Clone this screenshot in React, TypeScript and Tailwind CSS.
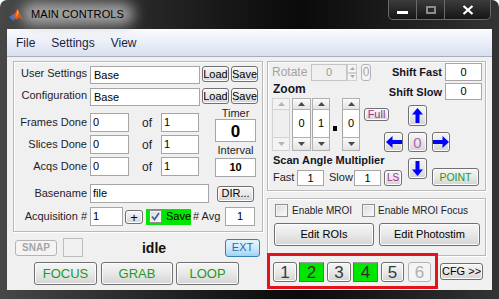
import React from "react";

const BTN =
  "box-border flex items-center justify-center border border-[#707070] rounded-[3px] bg-linear-to-b from-[#f6f6f6] via-[#e8e8e8] to-[#d4d4d4] shadow-[inset_0_0_0_1px_#fcfcfc] leading-none whitespace-nowrap";
const DIS =
  "box-border flex items-center justify-center border border-[#b4b4b4] rounded-[3px] bg-[#f4f4f4] leading-none whitespace-nowrap";
const EDIT =
  "box-border flex items-center border border-[#a6a6a6] bg-white leading-none whitespace-nowrap text-black text-[11px]";
const PANEL =
  "box-border border border-[#b9b9b9] shadow-[inset_1px_1px_0_#ffffff,1px_1px_0_#ffffff]";
const BOLDLAB = "font-bold text-[#151525] leading-none whitespace-nowrap";

function Lab({ children, extra = "" }: { children: React.ReactNode; extra?: string }) {
  return (
    <div
      className={
        "w-[73px] h-full flex items-center justify-end text-[11px] text-[#1d1d2b] leading-none whitespace-nowrap " +
        extra
      }
    >
      {children}
    </div>
  );
}

function Tri({ down = false, color }: { down?: boolean; color: string }) {
  return (
    <svg width="7" height="4" viewBox="0 0 7 4">
      <path d={down ? "M0 0L3.5 4L7 0Z" : "M0 4L3.5 0L7 4Z"} fill={color} />
    </svg>
  );
}

function SpinCol({ value, disabled = false, w }: { value?: string; disabled?: boolean; w: string }) {
  const c = disabled ? "#b4b4b4" : "#4a4a4a";
  const btn = disabled
    ? "box-border border border-[#d2d2d2] bg-[#f3f3f3] flex items-center justify-center"
    : "box-border border border-[#b0b0b0] bg-linear-to-b from-[#fafafa] to-[#e3e3e3] flex items-center justify-center";
  return (
    <div className={"flex flex-col " + w}>
      <div className={"h-[12px] " + btn}>
        <Tri color={c} />
      </div>
      <div
        className={
          "h-[27px] box-border border-x flex items-center justify-center text-[11px] text-black " +
          (disabled ? "border-[#d2d2d2] bg-[#efefef]" : "border-[#a6a6a6] bg-white")
        }
      >
        {value}
      </div>
      <div className={"h-[14px] " + btn}>
        <Tri down color={c} />
      </div>
    </div>
  );
}

function ArrowV({ down = false }: { down?: boolean }) {
  return (
    <svg width="11" height="15" viewBox="0 0 11 15" className={down ? "rotate-180" : ""}>
      <path d="M5.5 0L11 6.5L7.5 6.5L7.5 15L3.5 15L3.5 6.5L0 6.5Z" fill="#0000ff" />
    </svg>
  );
}

function ArrowH({ right = false }: { right?: boolean }) {
  return (
    <svg width="16" height="12" viewBox="0 0 16 12" className={right ? "rotate-180" : ""}>
      <path d="M0 6L6.5 0L6.5 4L16 4L16 8L6.5 8L6.5 12Z" fill="#0000ff" />
    </svg>
  );
}

function Check({ checked = false }: { checked?: boolean }) {
  return (
    <div className="box-border w-[13px] h-[13px] border border-[#8e8f8f] bg-linear-to-br from-[#dadbdc] to-[#fbfbfb] shadow-[inset_0_0_0_1px_#f4f4f4] flex items-center justify-center">
      {checked && (
        <svg width="9" height="9" viewBox="0 0 9 9">
          <path d="M1 4.5L3.5 7.5L8 1" stroke="#4a5f97" strokeWidth="1.8" fill="none" />
        </svg>
      )}
    </div>
  );
}

export default function App() {
  return (
    <div className="w-[499px] h-[299px] overflow-hidden bg-white font-['Liberation_Sans',Arial,sans-serif]">
      <div className="w-full h-full rounded-t-[7px] bg-linear-to-r from-[#474747] via-[#0a0a0a] via-60% to-[#343434] flex flex-col">
        {/* title bar */}
        <div className="h-[29px] flex items-center relative">
          <div className="absolute left-[22px] top-[3px] w-[112px] h-[22px] rounded-full bg-[#b4b4b4] blur-[7px] opacity-90" />
          <div className="ml-[9px] w-[14px] h-[14px] relative">
            <svg width="14" height="14" viewBox="0 0 14 14">
              <path d="M0 9L5 5.5L8 8L4.5 13Z" fill="#3d74c9" />
              <path d="M4 8.5L8.5 1L14 12.5L10.5 9.5L7.5 11.5Z" fill="#e5561a" />
              <path d="M8.5 1L10 5L7 9Z" fill="#f5a623" />
            </svg>
          </div>
          <div className="ml-[8px] text-[11px] text-black leading-none relative tracking-[0.1px]">MAIN CONTROLS</div>
          <div className="flex-1" />
          <div className="flex self-start mr-[8px]">
            <div className="box-border w-[29px] h-[20px] border border-t-0 border-[#6a6a6a] rounded-bl-[5px] bg-linear-to-b from-[#3c3c3c] to-[#161616] flex items-center justify-center">
              <div className="w-[11px] h-[3px] bg-white mt-[5px] shadow-[0_0_1px_#000]" />
            </div>
            <div className="box-border w-[28px] h-[20px] border border-t-0 border-l-0 border-[#6a6a6a] bg-linear-to-b from-[#3c3c3c] to-[#161616] flex items-center justify-center">
              <div className="box-border w-[10px] h-[8px] border-2 border-[#8c8c8c] bg-[#2a2a2a]" />
            </div>
            <div className="box-border w-[46px] h-[20px] border border-t-0 border-l-0 border-[#6a6a6a] rounded-br-[5px] bg-linear-to-b from-[#3c3c3c] to-[#161616] flex items-center justify-center">
              <svg width="12" height="10" viewBox="0 0 12 10">
                <path d="M1.5 1L10.5 9M10.5 1L1.5 9" stroke="#ffffff" strokeWidth="2.3" />
              </svg>
            </div>
          </div>
        </div>

        {/* client */}
        <div className="ml-[7px] w-[485px] flex flex-col">
          <div className="box-border h-[28px] bg-linear-to-b from-[#fbfcfe] via-[#eaeef8] to-[#d9dff0] border-b border-[#a9afba] flex items-center pl-[9px] gap-[16px] text-[12px] text-[#1e1e3c] leading-none">
            <span>File</span>
            <span>Settings</span>
            <span>View</span>
          </div>

          <div className="h-[233px] bg-[#f0f0f0] flex pl-[6px] pt-[4px] gap-[4px]">
            {/* LEFT COLUMN */}
            <div className="w-[250px] flex flex-col">
              <div className={PANEL + " flex flex-col pb-[5px]"}>
                <div className="flex items-start h-[18px] mt-[4px]">
                  <Lab extra="pb-[3px]">User Settings</Lab>
                  <div className={EDIT + " ml-[3px] w-[110px] h-[18px] pl-[3px]"}>Base</div>
                  <div className={BTN + " ml-[2px] w-[27px] h-[16px] text-[11px] text-black"}>Load</div>
                  <div className={BTN + " ml-[2px] w-[27px] h-[16px] text-[11px] text-black"}>Save</div>
                </div>
                <div className="flex items-start h-[18px] mt-[4px]">
                  <Lab extra="pb-[3px]">Configuration</Lab>
                  <div className={EDIT + " ml-[3px] w-[110px] h-[18px] pl-[3px]"}>Base</div>
                  <div className={BTN + " ml-[2px] w-[27px] h-[16px] text-[11px] text-black"}>Load</div>
                  <div className={BTN + " ml-[2px] w-[27px] h-[16px] text-[11px] text-black"}>Save</div>
                </div>

                <div className="flex mt-[2px]">
                  <div className="flex flex-col pt-[5px] gap-[3px]">
                    {["Frames Done", "Slices Done", "Acqs Done"].map((l) => (
                      <div key={l} className="flex items-center h-[19px]">
                        <Lab>{l}</Lab>
                        <div className={EDIT + " ml-[3px] w-[39px] h-[19px] pl-[2px]"}>0</div>
                        <div className="w-[32px] pl-[13px] text-[12px] text-[#1d1d2b] leading-none">of</div>
                        <div className={EDIT + " w-[38px] h-[19px] pl-[2px]"}>1</div>
                      </div>
                    ))}
                  </div>
                  <div className="ml-[16px] w-[41px] flex flex-col items-center">
                    <div className="h-[11px] leading-[11px] text-[11px] text-[#1d1d2b]">Timer</div>
                    <div className={EDIT + " w-[41px] h-[23px] justify-center text-[17px] font-bold pt-[2px]"}>0</div>
                    <div className="h-[16px] leading-[17px] text-[11px] text-[#1d1d2b]">Interval</div>
                    <div className={EDIT + " w-[41px] h-[19px] justify-center font-bold"}>10</div>
                  </div>
                </div>

                <div className="flex items-center h-[19px] mt-[7px]">
                  <Lab>Basename</Lab>
                  <div className={EDIT + " ml-[3px] w-[119px] h-[19px] pl-[2px]"}>file</div>
                  <div className={BTN + " ml-[8px] w-[37px] h-[16px] text-[11px] text-black"}>DIR...</div>
                </div>
                <div className="flex items-center h-[19px] mt-[4px]">
                  <Lab>Acquisition #</Lab>
                  <div className={EDIT + " ml-[3px] w-[33px] h-[19px] pl-[2px]"}>1</div>
                  <div className={BTN + " ml-[2px] w-[18px] h-[14px] text-[13px] pt-[1px] text-black"}>+</div>
                  <div className="ml-[3px] w-[45px] h-[16px] bg-[#00e600] flex items-center pl-[3px]">
                    <Check checked />
                    <span className="ml-[4px] text-[11px] text-black leading-none">Save</span>
                  </div>
                  <div className="ml-[2px] w-[32px] text-[11px] text-[#1d1d2b] leading-none whitespace-nowrap">
                    # Avg
                  </div>
                  <div className={EDIT + " w-[30px] h-[19px] justify-center"}>1</div>
                </div>
              </div>

              <div className="flex items-center h-[19px] mt-[6px]">
                <div className={DIS + " ml-[2px] w-[42px] h-[16px] text-[10px] font-bold text-[#a6a6a6]"}>SNAP</div>
                <div className="box-border ml-[6px] w-[20px] h-[19px] border border-[#bdbdbd] bg-[#f0f0f0]" />
                <div className="flex-1 text-center text-[14px] font-bold text-[#111] leading-none">idle</div>
                <div className="box-border mr-[3px] w-[35px] h-[18px] flex items-center justify-center border border-[#3c7fb1] rounded-[3px] bg-linear-to-b from-[#e5f4fd] via-[#cfeafb] to-[#9fd3f3] text-[#2c6ab0] text-[11px] leading-none">
                  EXT
                </div>
              </div>
              <div className="flex h-[23px] mt-[5px]">
                <div className={BTN + " ml-[21px] w-[63px] h-[23px] text-[13px] text-[#1f9a1f]"}>FOCUS</div>
                <div className={BTN + " ml-[4px] w-[72px] h-[23px] text-[13px] text-[#1f9a1f]"}>GRAB</div>
                <div className={BTN + " ml-[3px] w-[63px] h-[23px] text-[13px] text-[#1f9a1f]"}>LOOP</div>
              </div>
            </div>

            {/* RIGHT COLUMN */}
            <div className="w-[219px] flex flex-col">
              <div className={PANEL + " flex flex-col pb-[4px]"}>
                <div className="flex items-center h-[18px] mt-[1px] pl-[4px] pr-[3px]">
                  <div className="w-[39px] text-[12px] text-[#a3a3a3] leading-none">Rotate</div>
                  <div className="box-border w-[36px] h-[17px] border border-[#c4c4c4] bg-[#f0f0f0] flex items-center justify-center text-[11px] text-[#9a9a9a] leading-none">
                    0
                  </div>
                  <div className="w-[10px] h-[17px] flex flex-col">
                    <div className="box-border h-[9px] border border-[#cfcfcf] bg-[#f4f4f4] flex items-center justify-center">
                      <svg width="5" height="3" viewBox="0 0 5 3"><path d="M0 3L2.5 0L5 3Z" fill="#a8a8a8" /></svg>
                    </div>
                    <div className="box-border h-[8px] border border-[#cfcfcf] bg-[#f4f4f4] flex items-center justify-center">
                      <svg width="5" height="3" viewBox="0 0 5 3"><path d="M0 0L2.5 3L5 0Z" fill="#a8a8a8" /></svg>
                    </div>
                  </div>
                  <div className={DIS + " ml-[4px] w-[10px] h-[17px] text-[12px] text-[#a6a6a6]"}>0</div>
                  <div className="flex-1" />
                  <div className={BOLDLAB + " text-[11px]"}>Shift Fast</div>
                  <div className={EDIT + " ml-[3px] w-[37px] h-[18px] justify-center"}>0</div>
                </div>
                <div className="flex items-start h-[17px] mt-[2px] pl-[4px] pr-[3px]">
                  <div className={BOLDLAB + " text-[12px] h-[12px] leading-[12px] pl-[1px]"}>Zoom</div>
                  <div className="flex-1" />
                  <div className={BOLDLAB + " text-[11px] h-[17px] flex items-center pt-[2px]"}>Shift Slow</div>
                  <div className={EDIT + " ml-[3px] w-[37px] h-[17px] justify-center"}>0</div>
                </div>

                <div className="flex items-start mt-[-2px] pl-[4px]">
                  <div className="w-[130px] flex flex-col">
                    <div className="flex items-start h-[53px]">
                      <SpinCol disabled w="w-[18px]" />
                      <div className="ml-[2px] flex">
                        <SpinCol value="0" w="w-[19px]" />
                      </div>
                      <div className="ml-[1px] flex">
                        <SpinCol value="1" w="w-[18px]" />
                      </div>
                      <div className="w-[12px] h-full">
                        <div className="ml-[3px] mt-[28px] w-[4px] h-[5px] bg-black" />
                      </div>
                      <SpinCol value="0" w="w-[18px]" />
                      <div className={BTN + " ml-[4px] mt-[10px] w-[25px] h-[13px] text-[11px] text-[#a0308e]"}>Full</div>
                    </div>
                    <div className={BOLDLAB + " text-[11px] mt-[4px] h-[14px] leading-[14px] pl-[1px]"}>Scan Angle Multiplier</div>
                    <div className="flex items-center h-[17px]">
                      <div className="w-[25px] pl-[1px] text-[11px] text-[#1d1d2b] leading-none">Fast</div>
                      <div className={EDIT + " w-[27px] h-[16px] justify-center mt-[1px]"}>1</div>
                      <div className="w-[30px] pl-[5px] text-[11px] text-[#1d1d2b] leading-none">Slow</div>
                      <div className={EDIT + " w-[27px] h-[16px] justify-center mt-[1px]"}>1</div>
                      <div className={BTN + " ml-[3px] w-[18px] h-[16px] text-[10px] text-[#a0308e]"}>LS</div>
                    </div>
                  </div>
                  <div className="ml-[-18px] mt-[7px] flex flex-col">
                    <div className={BTN + " ml-[24px] w-[19px] h-[21px]"}>
                      <ArrowV />
                    </div>
                    <div className="flex mt-[6px]">
                      <div className={BTN + " w-[19px] h-[20px]"}>
                        <ArrowH />
                      </div>
                      <div className={BTN + " ml-[5px] w-[19px] h-[20px] text-[15px] text-[#b65fb6]"}>0</div>
                      <div className={BTN + " ml-[5px] w-[18px] h-[20px]"}>
                        <ArrowH right />
                      </div>
                    </div>
                    <div className="flex items-start mt-[6px]">
                      <div className={BTN + " ml-[24px] w-[19px] h-[21px]"}>
                        <ArrowV down />
                      </div>
                      <div className={BTN + " ml-[5px] mt-[10px] w-[47px] h-[18px] text-[10.5px] text-[#1f9a1f]"}>POINT</div>
                    </div>
                  </div>
                </div>
              </div>

              <div className={PANEL + " mt-[7px] flex flex-col pb-[9px]"}>
                <div className="flex items-center h-[13px] mt-[5px] pl-[7px]">
                  <div className="w-[87px] flex items-center">
                    <Check />
                    <span className="ml-[4px] text-[10px] text-[#1d1d2b] leading-none whitespace-nowrap">Enable MROI</span>
                  </div>
                  <Check />
                  <span className="ml-[3px] text-[10px] text-[#1d1d2b] leading-none whitespace-nowrap">Enable MROI Focus</span>
                </div>
                <div className="flex h-[23px] mt-[6px] pl-[6px]">
                  <div className={BTN + " w-[100px] h-[23px] text-[11px] text-black"}>Edit ROIs</div>
                  <div className={BTN + " ml-[5px] w-[101px] h-[23px] text-[11px] text-black"}>Edit Photostim</div>
                </div>
              </div>

              <div className="flex items-center mt-[-3px] relative">
                <div className="box-border w-[171px] h-[36px] border-[3px] border-[#e3121b] bg-[#f0f0f0] flex items-start pt-[6px] pl-[3px]">
                  <div className={BTN + " w-[24px] h-[20px] text-[17px] text-[#3a3a3a]"}>1</div>
                  <div className="box-border ml-[2px] w-[25px] h-[20px] flex items-center justify-center bg-[#00e600] border border-[#6a6a6a] border-t-[#9a9a9a] text-[17px] text-[#2e2e2e] leading-none">
                    2
                  </div>
                  <div className={BTN + " ml-[3px] w-[24px] h-[20px] text-[17px] text-[#3a3a3a]"}>3</div>
                  <div className="box-border ml-[2px] w-[25px] h-[20px] flex items-center justify-center bg-[#00e600] border border-[#6a6a6a] border-t-[#9a9a9a] text-[17px] text-[#2e2e2e] leading-none">
                    4
                  </div>
                  <div className={BTN + " ml-[3px] w-[23px] h-[20px] text-[17px] text-[#3a3a3a]"}>5</div>
                  <div className={DIS + " ml-[4px] w-[23px] h-[20px] text-[17px] text-[#b0b0b0]"}>6</div>
                </div>
                <div className={BTN + " ml-[2px] w-[43px] h-[17px] text-[11px] text-black"}>CFG &gt;&gt;</div>
              </div>
            </div>
          </div>
        </div>
      </div>
    </div>
  );
}
